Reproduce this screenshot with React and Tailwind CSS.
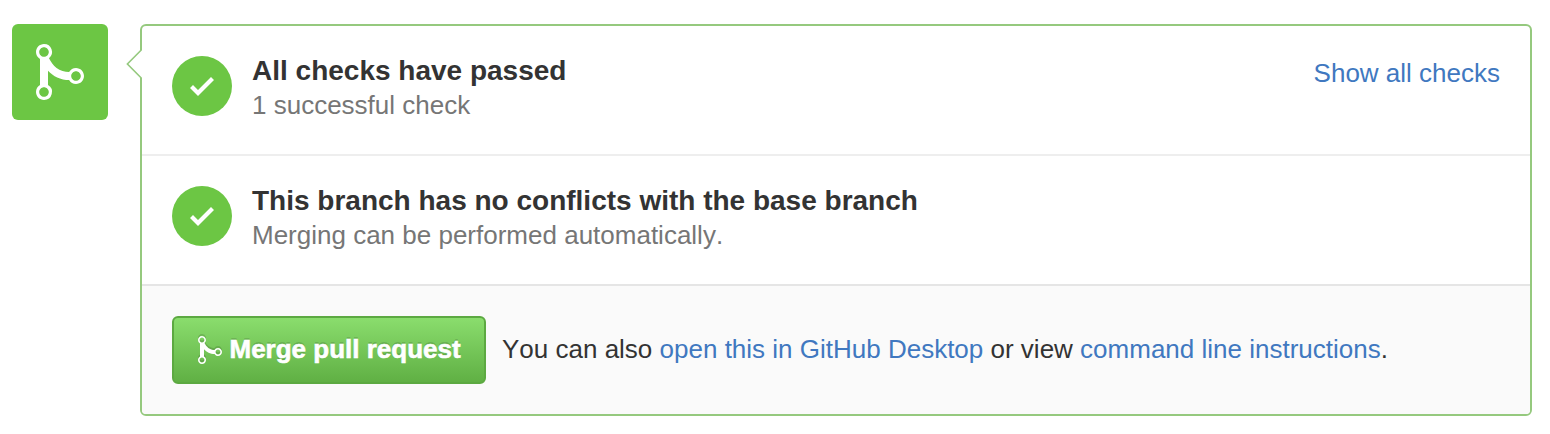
const MERGE_PATH =
  "M10 7c-.73 0-1.38.41-1.73 1.02V8C7.22 7.98 6 7.64 5.14 6.98c-.75-.58-1.5-1.61-1.89-2.44A1.993 1.993 0 0 0 2 .99C.89.99 0 1.89 0 3a2 2 0 0 0 1 1.72v6.56c-.59.35-1 .99-1 1.72 0 1.11.89 2 2 2a1.993 1.993 0 0 0 1-3.72V7.67c.67.7 1.44 1.27 2.3 1.69.86.42 2.03.63 2.97.64v-.02c.36.61 1 1.02 1.73 1.02 1.11 0 2-.89 2-2 0-1.11-.89-2-2-2zm-6.8 6c0 .66-.55 1.2-1.2 1.2-.65 0-1.2-.55-1.2-1.2 0-.65.55-1.2 1.2-1.2.65 0 1.2.55 1.2 1.2zm0-10c0 .66-.55 1.2-1.2 1.2C1.34 4.2.8 3.65.8 3c0-.65.55-1.2 1.2-1.2.65 0 1.2.55 1.2 1.2zm6.8 7.2c-.66 0-1.2-.55-1.2-1.2 0-.65.55-1.2 1.2-1.2.65 0 1.2.55 1.2 1.2 0 .65-.55 1.2-1.2 1.2z";

function MergeIcon({ className }) {
  return (
    <svg viewBox="0 0 12 16" className={className} fill="currentColor" aria-hidden="true">
      <path fillRule="evenodd" d={MERGE_PATH} />
    </svg>
  );
}

function StatusCheck() {
  return (
    <div className="flex size-[60px] shrink-0 items-center justify-center rounded-full bg-[#6cc644] text-white">
      <svg viewBox="0 0 12 16" className="h-8 w-6" fill="currentColor" aria-hidden="true">
        <path d="M12 5l-8 8-4-4 1.5-1.5L4 10l6.5-6.5L12 5z" />
      </svg>
    </div>
  );
}

function StatusRow({ title, detail, action, className }) {
  return (
    <div className={`flex h-[130px] items-start border-b-2 px-[30px] pt-[30px] ${className}`}>
      <StatusCheck />
      <div className="ml-5 grow whitespace-nowrap">
        <h4 className="text-[28px] leading-[30px] font-bold text-[#333]">{title}</h4>
        <p className="mt-px text-[26px] leading-[36px] text-[#767676] [font-kerning:none]">{detail}</p>
      </div>
      {action}
    </div>
  );
}

function Link({ children, className = "" }) {
  return (
    <a href="#" className={`text-[#4078c0] ${className}`}>
      {children}
    </a>
  );
}

export default function App() {
  return (
    <div className="flex h-[434px] w-[1550px] items-start bg-white pt-6 pl-3 font-['Liberation_Sans',Arial,sans-serif] text-[26px] text-[#333]">
      <div className="flex size-24 shrink-0 items-center justify-center rounded-[6px] bg-[#6cc644] text-white">
        <MergeIcon className="h-16 w-12" />
      </div>
      <section className="relative ml-8 h-[392px] w-[1392px] rounded-[6px] border-2 border-[#95c97e] bg-white">
        <svg viewBox="0 0 17 30" className="absolute top-[23px] -left-4 h-[30px] w-[17px]" aria-hidden="true">
          <path d="M16 1L1.5 15L16 29" fill="#fff" />
          <path d="M14 1h2v28h-2z" fill="#fff" />
          <path d="M15.5 .7L1.4 15L15.5 29.3" fill="none" stroke="#95c97e" strokeWidth="1.6" />
        </svg>
        <StatusRow
          className="border-[#eee]"
          title="All checks have passed"
          detail="1 successful check"
          action={<Link className="mt-[2px] leading-[30px] whitespace-nowrap">Show all checks</Link>}
        />
        <StatusRow
          className="border-[#e5e5e5]"
          title="This branch has no conflicts with the base branch"
          detail="Merging can be performed automatically."
        />
        <div className="flex h-[128px] items-start rounded-b-[4px] bg-[#fafafa] px-[30px] pt-[30px]">
          <button className="flex h-[68px] w-[314px] shrink-0 items-center rounded-[6px] border-2 border-[#5ca941] bg-linear-to-b from-[#8add6d] to-[#60b044] pl-6 font-bold whitespace-nowrap text-white [text-shadow:0_-2px_0_rgba(0,0,0,0.15)]">
            <MergeIcon className="h-8 w-6 drop-shadow-[0_-2px_0_rgba(0,0,0,0.15)]" />
            <span className="-mt-[2px] ml-[7.5px] [-webkit-text-stroke:0.6px_white]">Merge pull request</span>
          </button>
          <p className="ml-4 leading-[66px] whitespace-nowrap [font-kerning:none]">
            You can also <Link>open this in GitHub Desktop</Link> or view <Link>command line instructions</Link>.
          </p>
        </div>
      </section>
    </div>
  );
}
